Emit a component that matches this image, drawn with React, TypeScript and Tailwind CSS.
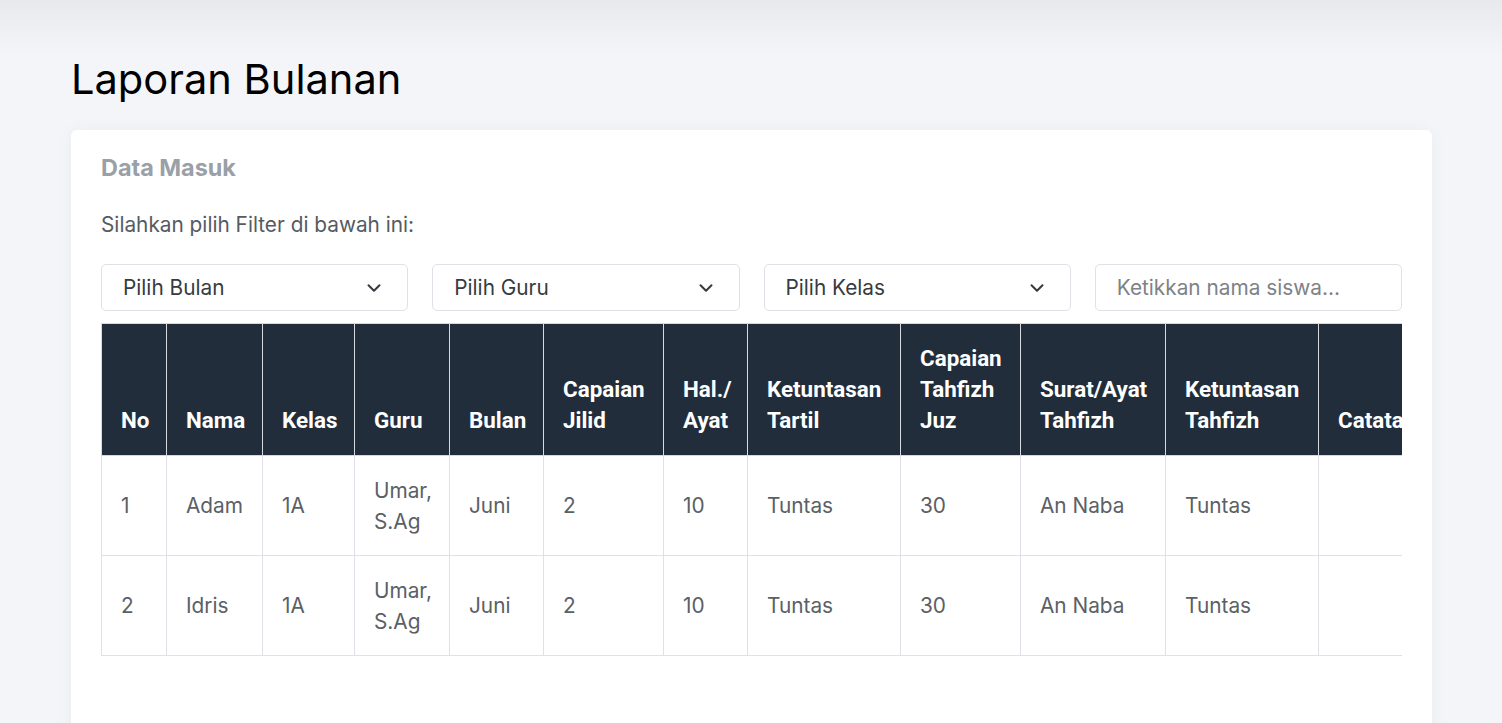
import { ChevronDown } from "lucide-react"

const headers = [
  { label: ["No"], w: "w-[65px]" },
  { label: ["Nama"], w: "w-[96px]" },
  { label: ["Kelas"], w: "w-[92px]" },
  { label: ["Guru"], w: "w-[95px]" },
  { label: ["Bulan"], w: "w-[94px]" },
  { label: ["Capaian", "Jilid"], w: "w-[120px]" },
  { label: ["Hal./", "Ayat"], w: "w-[84px]" },
  { label: ["Ketuntasan", "Tartil"], w: "w-[153px]" },
  { label: ["Capaian", "Tahfizh", "Juz"], w: "w-[120px]" },
  { label: ["Surat/Ayat", "Tahfizh"], w: "w-[145px]" },
  { label: ["Ketuntasan", "Tahfizh"], w: "w-[153px]" },
  { label: ["Catatan"], w: "w-[160px]" },
]

const rows = [
  ["1", "Adam", "1A", "Umar, S.Ag", "Juni", "2", "10", "Tuntas", "30", "An Naba", "Tuntas", ""],
  ["2", "Idris", "1A", "Umar, S.Ag", "Juni", "2", "10", "Tuntas", "30", "An Naba", "Tuntas", ""],
]

function Select({ label }: { label: string }) {
  return (
    <div className="h-[47px] flex items-center justify-between border border-[#dee2e6] rounded-[5px] pl-[21px] pr-[22px] bg-white">
      <span className="text-[20.8px] text-[#363b41]">{label}</span>
      <ChevronDown className="w-[22px] h-[22px] text-[#343a40]" strokeWidth={2.2} />
    </div>
  )
}

export default function App() {
  return (
    <div className="h-[723px] overflow-hidden bg-[linear-gradient(to_bottom,#e7e9ed,#f4f5f9_55px)] pl-[71px] pr-[70px] pt-[54px] font-['Inter',sans-serif]">
      <h1 className="text-[41.6px] leading-[50px] text-black font-normal">Laporan Bulanan</h1>

      <div className="mt-[26px] bg-white rounded-[6px] shadow-[0_0_18px_rgba(0,0,0,0.04)] pl-[30px] pr-[30px] pt-[21px] pb-[120px]">
        <h2 className="text-[23.4px] leading-[33px] font-bold text-[#9aa0a7]">Data Masuk</h2>
        <p className="mt-[25px] text-[20.8px] leading-[31px] text-[#555b61]">Silahkan pilih Filter di bawah ini:</p>

        <div className="mt-[24px] grid grid-cols-4 gap-[24px]">
          <Select label="Pilih Bulan" />
          <Select label="Pilih Guru" />
          <Select label="Pilih Kelas" />
          <div className="h-[47px] flex items-center border border-[#dee2e6] rounded-[5px] pl-[21px] bg-white">
            <span className="text-[20.8px] text-[#7d8288]">Ketikkan nama siswa...</span>
          </div>
        </div>

        <div className="mt-[12px] overflow-hidden">
          <table className="table-fixed border-collapse w-[1377px]">
            <thead>
              <tr className="h-[132px] bg-[#212d3b]">
                {headers.map((h, i) => (
                  <th
                    key={i}
                    className={`${h.w} align-bottom text-left pl-[19px] pr-[4px] pb-[19px] border border-[#d6d9dd] font-['Roboto',sans-serif] font-bold text-[22.4px] leading-[31px] text-white whitespace-nowrap`}
                  >
                    {h.label.map((l, j) => (
                      <div key={j}>{l}</div>
                    ))}
                  </th>
                ))}
              </tr>
            </thead>
            <tbody>
              {rows.map((r, i) => (
                <tr key={i} className="h-[100px]">
                  {r.map((c, j) => (
                    <td
                      key={j}
                      className="align-middle pl-[19px] pr-[8px] border border-[#dee2e6] text-[20.8px] leading-[31px] text-[#5a6066]"
                    >
                      {c}
                    </td>
                  ))}
                </tr>
              ))}
            </tbody>
          </table>
        </div>
      </div>
    </div>
  )
}
